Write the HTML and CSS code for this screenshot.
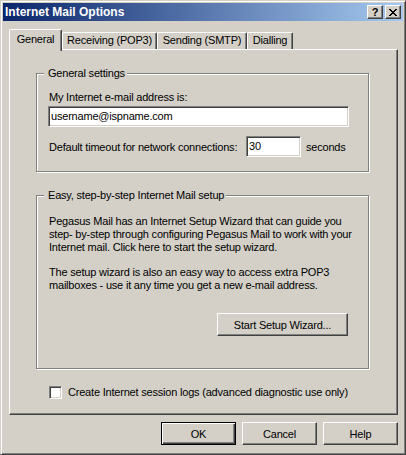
FILE: index.html
```html
<!DOCTYPE html>
<html>
<head>
<meta charset="utf-8">
<title>Internet Mail Options</title>
<link rel="stylesheet" href="styles.css">
</head>
<body>
<div class="window">
  <div class="titlebar">
    <span class="title">Internet Mail Options</span>
    <div class="tbtns">
      <span class="tbtn help">?</span>
      <span class="tbtn close"><svg width="8" height="7" viewBox="0 0 8 7" shape-rendering="crispEdges"><path d="M0 0h2v1h-2zM6 0h2v1h-2zM1 1h2v1h-2zM5 1h2v1h-2zM2 2h4v1h-4zM3 3h2v1h-2zM2 4h4v1h-4zM1 5h2v1h-2zM5 5h2v1h-2zM0 6h2v1h-2zM6 6h2v1h-2z" fill="#000"/></svg></span>
    </div>
  </div>
  <div class="client">
    <div class="tabs">
      <div class="tab sel w-gen">General</div>
      <div class="tab w-rec">Receiving (POP3)</div>
      <div class="tab w-snd">Sending (SMTP)</div>
      <div class="tab w-dia">Dialling</div>
    </div>
    <div class="panel">
      <div class="group g1">
        <div class="gtitle">General settings</div>
        <div class="lbl">My Internet e-mail address is:</div>
        <div class="txt email">username@ispname.com</div>
        <div class="row">
          <span class="tlabel">Default timeout for network connections:</span>
          <span class="txt small">30</span>
          <span>seconds</span>
        </div>
      </div>
      <div class="group g2">
        <div class="gtitle">Easy, step-by-step Internet Mail setup</div>
        <p class="para p1">Pegasus Mail has an Internet Setup Wizard that can guide you<br>step- by-step through configuring Pegasus Mail to work with your<br>Internet mail. Click here to start the setup wizard.</p>
        <p class="para p2">The setup wizard is also an easy way to access extra POP3<br>mailboxes - use it any time you get a new e-mail address.</p>
        <div class="btnrow"><span class="btn wiz">Start Setup Wizard...</span></div>
      </div>
      <div class="check">
        <span class="box"></span>
        <span>Create Internet session logs (advanced diagnostic use only)</span>
      </div>
    </div>
    <div class="buttons">
      <span class="btn dlg def">OK</span>
      <span class="btn dlg">Cancel</span>
      <span class="btn dlg">Help</span>
    </div>
  </div>
</div>
</body>
</html>
```
FILE: styles.css
```css
* { box-sizing: border-box; }
html, body { margin: 0; padding: 0; }
body {
  background: #d4d0c8;
  font-family: "Liberation Sans", Arial, sans-serif;
  font-size: 11px;
  letter-spacing: -0.2px;
  color: #000;
}
.window {
  width: 406px;
  height: 455px;
  border: 1px solid;
  border-color: #d4d0c8 #404040 #404040 #d4d0c8;
  box-shadow: inset 1px 1px 0 #fff, inset -1px -1px 0 #808080;
  padding: 2px 2px 0 2px;
  background: #d4d0c8;
}
.titlebar {
  height: 18px;
  background: linear-gradient(to right, #0a246a, #a6caf0);
  display: flex;
  align-items: center;
  justify-content: space-between;
  padding: 0 2px 0 2px;
}
.title {
  color: #fff;
  font-weight: bold;
  font-size: 12px;
  letter-spacing: 0;
  line-height: 18px;
}
.tbtns { display: flex; gap: 2px; }
.tbtn {
  width: 16px;
  height: 14px;
  background: #d4d0c8;
  border: 1px solid;
  border-color: #fff #404040 #404040 #fff;
  box-shadow: inset -1px -1px 0 #808080;
  display: flex;
  align-items: center;
  justify-content: center;
  font-weight: bold;
  font-size: 11px;
  line-height: 12px;
}
.client { padding: 8px 5px 0 6px; }
.tabs {
  display: flex;
  align-items: flex-end;
  height: 20px;
}
.tab {
  height: 17px;
  border: 1px solid;
  border-bottom: 0;
  border-color: #fff #404040 #fff #fff;
  box-shadow: inset -1px 0 0 #808080;
  border-radius: 2px 2px 0 0;
  text-align: center;
  line-height: 15px;
  white-space: nowrap;
  background: #d4d0c8;
}
.tab.sel {
  height: 22px;
  margin-bottom: -2px;
  position: relative;
  z-index: 1;
  padding-top: 2px;
}
.w-gen { width: 53px; }
.w-rec { width: 95px; }
.w-snd { width: 90px; }
.w-dia { width: 46px; }
.panel {
  width: 389px;
  height: 366px;
  border: 1px solid;
  border-color: #fff #404040 #404040 #fff;
  box-shadow: inset -1px -1px 0 #808080;
  padding: 23px 0 0 26px;
}
.group {
  width: 333px;
  border: 1px solid #808080;
  box-shadow: 1px 1px 0 #fff, inset 1px 1px 0 #fff;
  padding: 0 20px 0 11px;
}
.g1 { height: 99px; }
.g2 { height: 174px; margin-top: 23px; display: flex; flex-direction: column; }
.gtitle {
  width: fit-content;
  margin: -7px 0 0 -4px;
  padding: 0 2px 0 4px;
  background: #d4d0c8;
  line-height: 13px;
  white-space: nowrap;
}
.lbl { margin-top: 11px; line-height: 13px; padding-left: 1px; }
.txt {
  background: #fff;
  border: 1px solid;
  border-color: #808080 #fff #fff #808080;
  box-shadow: inset 1px 1px 0 #404040, inset -1px -1px 0 #d4d0c8;
  padding-left: 2px;
  height: 21px;
  line-height: 19px;
  white-space: nowrap;
}
.email { width: 301px; margin-top: 2px; }
.row {
  display: flex;
  align-items: center;
  margin-top: 9px;
  padding-left: 1px;
  white-space: nowrap;
}
.tlabel { width: 192px; margin-right: 5px; }
.small { width: 55px; margin-right: 5px; }
.para {
  margin: 0;
  line-height: 13px;
  white-space: nowrap;
  padding-left: 1px;
}
.p1 { margin-top: 13px; }
.p2 { margin-top: 12px; }
.btnrow { display: flex; justify-content: flex-end; margin-top: 21px; }
.btn {
  display: flex;
  align-items: center;
  justify-content: center;
  height: 23px;
  background: #d4d0c8;
  border: 1px solid;
  border-color: #fff #404040 #404040 #fff;
  box-shadow: inset -1px -1px 0 #808080;
  white-space: nowrap;
}
.wiz { width: 131px; }
.check {
  display: flex;
  align-items: center;
  gap: 6px;
  margin: 17px 0 0 13px;
  line-height: 13px;
  white-space: nowrap;
}
.box {
  width: 13px;
  height: 13px;
  background: #fff;
  border: 1px solid;
  border-color: #808080 #fff #fff #808080;
  box-shadow: inset 1px 1px 0 #404040, inset -1px -1px 0 #d4d0c8;
}
.buttons {
  display: flex;
  justify-content: flex-end;
  gap: 6px;
  margin-top: 7px;
}
.dlg { width: 75px; }
.def {
  border: 1px solid #000;
  box-shadow: inset 1px 1px 0 #fff, inset -1px -1px 0 #404040, inset -2px -2px 0 #808080;
}
```
